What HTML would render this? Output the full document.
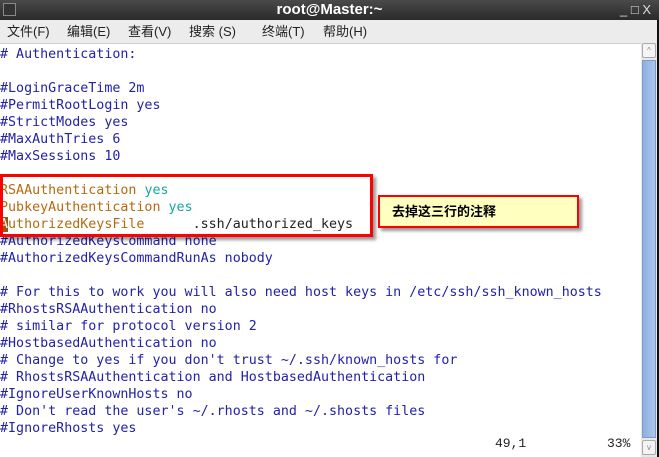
<!DOCTYPE html>
<html><head><meta charset="utf-8"><style>
body{margin:0;width:659px;height:457px;overflow:hidden;background:#fff;position:relative;font-family:"Liberation Sans","Noto Sans CJK SC",sans-serif}
.title{position:absolute;left:0;top:0;width:659px;height:20px;background:linear-gradient(#4a4a4a,#2a2a2a);color:#fff;font-weight:bold;font-size:15px;text-align:center;line-height:20px}
.menu{position:absolute;left:0;top:20px;width:659px;height:23px;background:#ececec;border-bottom:1px solid #cfcfcf;font-size:13px;line-height:23px;color:#222}
.menu span{position:absolute;top:0}
.txt{position:absolute;left:0;top:46px;font-family:"DejaVu Sans Mono","Liberation Mono",monospace;font-size:13.33px;line-height:17px;color:#2222aa;white-space:pre;letter-spacing:0}
.o{color:#b86a10}.c{color:#17a5a5}.k{color:#222}
.sb{position:absolute;left:641px;top:43px;width:16px;height:414px;background:#e8e8e8}
.thumb{position:absolute;left:642px;top:60px;width:14px;height:378px;background:linear-gradient(90deg,#8fb0de,#a9c6ee);border:1px solid #7d9cc8;box-sizing:border-box}
.btn{position:absolute;left:642px;width:14px;height:15px;background:#f4f4f4;border:1px solid #aaa;box-sizing:border-box;border-radius:2px;font-size:8px;color:#888;text-align:center;line-height:13px}
.edge{position:absolute;left:657px;top:20px;width:2px;height:437px;background:#111}
</style></head><body>
<div class="title"><span style="position:absolute;left:3px;top:3px;width:13px;height:13px;background:#333;border:1px solid #888;box-sizing:border-box"></span>root@Master:~<span style="position:absolute;right:8px;top:0;font-weight:normal;font-size:13px;color:#ddd">_ &#9633; X</span></div>
<div class="menu"><span style="left:7px">文件(F)</span><span style="left:67px">编辑(E)</span><span style="left:128px">查看(V)</span><span style="left:189px">搜索 (S)</span><span style="left:262px">终端(T)</span><span style="left:323px">帮助(H)</span></div>
<div class="txt"># Authentication:

#LoginGraceTime 2m
#PermitRootLogin yes
#StrictModes yes
#MaxAuthTries 6
#MaxSessions 10

<span class="o">RSAAuthentication</span> <span class="c">yes</span>
<span class="o">PubkeyAuthentication</span> <span class="c">yes</span>
<span class="o"><span style="background:#a0520a;color:#fff">A</span>uthorizedKeysFile</span><span class="k">      .ssh/authorized_keys</span>
#AuthorizedKeysCommand none
#AuthorizedKeysCommandRunAs nobody

# For this to work you will also need host keys in /etc/ssh/ssh_known_hosts
#RhostsRSAAuthentication no
# similar for protocol version 2
#HostbasedAuthentication no
# Change to yes if you don't trust ~/.ssh/known_hosts for
# RhostsRSAAuthentication and HostbasedAuthentication
#IgnoreUserKnownHosts no
# Don't read the user's ~/.rhosts and ~/.shosts files
#IgnoreRhosts yes</div>
<div style="position:absolute;left:495px;top:436px;font-family:'Liberation Mono',monospace;font-size:13px;color:#222">49,1</div>
<div style="position:absolute;left:607px;top:436px;font-family:'Liberation Mono',monospace;font-size:13px;color:#222">33%</div>
<div style="position:absolute;left:0;top:174px;width:373px;height:63px;border:3px solid #f00;box-sizing:border-box;box-shadow:3px 3px 3px rgba(0,0,0,.4)"></div>
<div style="position:absolute;left:378px;top:195px;width:201px;height:33px;background:#ffffc0;border:2px solid #f00;box-sizing:border-box;box-shadow:3px 3px 3px rgba(0,0,0,.4);font-size:13px;font-weight:bold;line-height:29px;padding-left:12px">去掉这三行的注释</div>
<div class="sb"></div>
<div class="btn" style="top:43px">^</div>
<div class="thumb"></div>
<div class="btn" style="top:440px">v</div>
<div class="edge"></div>
</body></html>
